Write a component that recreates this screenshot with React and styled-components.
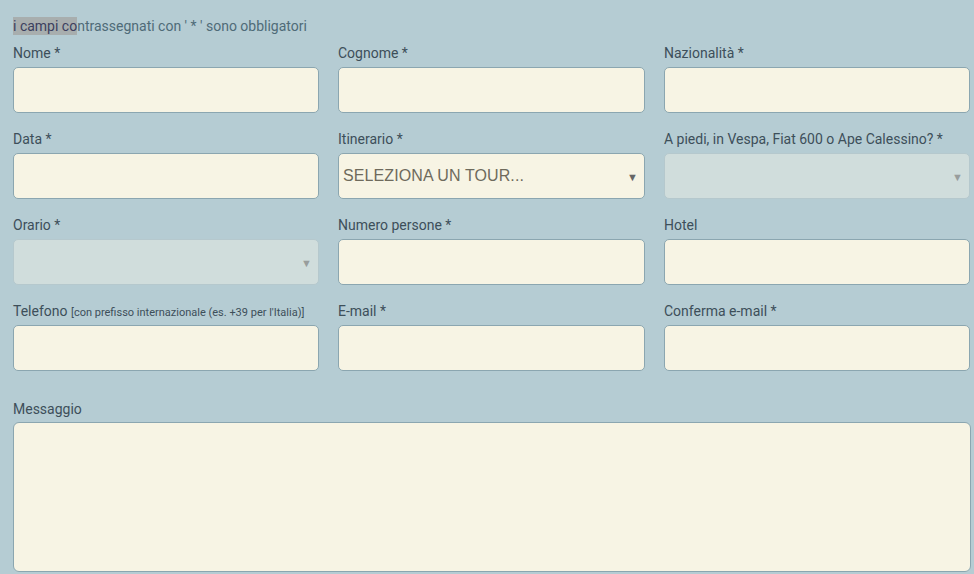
import React from 'react'
import styled, {createGlobalStyle} from 'styled-components'

const GlobalStyle = createGlobalStyle`
  html, body {
    margin: 0;
    padding: 0;
    background: #b5ccd3;
  }
  body {
    font-family: Roboto, "Liberation Sans", Arial, sans-serif;
  }
`

const FormWrapper = styled.form`
  box-sizing: border-box;
  width: 974px;
  height: 574px;
  overflow: hidden;
  padding: 17px 4px 0 13px;
  color: #3d4f5a;
  .intro {
    font-size: 14px;
    line-height: 18px;
    color: #4f6b78;
    margin: 0 0 7px;
    .sel {
      background: #a8aeae;
      color: #3c3f5e;
      padding: 1px 0;
    }
  }
`

const Grid = styled.div`
  display: grid;
  width: 958px;
  grid-template-columns: 306px 307px 306px;
  column-gap: 19px;
  row-gap: 15px;
`

const Field = styled.div`
  display: flex;
  flex-direction: column;
  margin-top: ${props => props.spaced ? '12px' : '0'};
  grid-column: ${props => props.wide ? '1 / -1' : 'auto'};
`

const Label = styled.label`
  font-size: 14px;
  line-height: 22px;
  height: 22px;
  margin-bottom: ${props => props.tight ? '2px' : '3px'};
  white-space: nowrap;
  small {
    font-size: 11px;
  }
`

const Input = styled.input`
  box-sizing: border-box;
  height: 46px;
  width: 100%;
  margin: 0;
  border: 1px solid #8ba6b0;
  border-radius: 5px;
  background: #f7f4e4;
  outline: none;
`

const SelectBox = styled.div`
  box-sizing: border-box;
  height: 46px;
  display: flex;
  align-items: center;
  justify-content: space-between;
  padding: 0 6px 0 4px;
  border: 1px solid ${props => props.disabled ? '#b5c8cd' : '#8ba6b0'};
  border-radius: 5px;
  background: ${props => props.disabled ? '#d0dddc' : '#f7f4e4'};
  .value {
    font-family: "Liberation Sans", Arial, sans-serif;
    font-size: 16px;
    color: #6e6a5c;
    letter-spacing: 0.1px;
  }
  .arrow {
    font-size: 11px;
    color: ${props => props.disabled ? '#999d9d' : '#666'};
    margin-top: 2px;
  }
`

const TextArea = styled.textarea`
  box-sizing: border-box;
  width: 958px;
  height: 150px;
  margin: 0;
  resize: none;
  border: 1px solid #8ba6b0;
  border-radius: 6px;
  background: #f7f4e4;
  outline: none;
`

function Select({value, disabled}){
  return (
    <SelectBox disabled={disabled}>
      <span className="value">{value}</span>
      <span className="arrow">▼</span>
    </SelectBox>
  )
}

export default function App(){
  return (
    <>
      <GlobalStyle />
      <FormWrapper>
        <p className="intro"><span className="sel">i campi co</span>ntrassegnati con ' * ' sono obbligatori</p>
        <Grid>
          <Field><Label>Nome *</Label><Input /></Field>
          <Field><Label>Cognome *</Label><Input /></Field>
          <Field><Label>Nazionalità *</Label><Input /></Field>

          <Field><Label>Data *</Label><Input /></Field>
          <Field><Label>Itinerario *</Label><Select value="SELEZIONA UN TOUR..." /></Field>
          <Field><Label>A piedi, in Vespa, Fiat 600 o Ape Calessino? *</Label><Select disabled /></Field>

          <Field><Label>Orario *</Label><Select disabled /></Field>
          <Field><Label>Numero persone *</Label><Input /></Field>
          <Field><Label>Hotel</Label><Input /></Field>

          <Field><Label>Telefono <small>[con prefisso internazionale (es. +39 per l'Italia)]</small></Label><Input /></Field>
          <Field><Label>E-mail *</Label><Input /></Field>
          <Field><Label>Conferma e-mail *</Label><Input /></Field>

          <Field wide spaced><Label tight>Messaggio</Label><TextArea /></Field>
        </Grid>
      </FormWrapper>
    </>
  )
}
